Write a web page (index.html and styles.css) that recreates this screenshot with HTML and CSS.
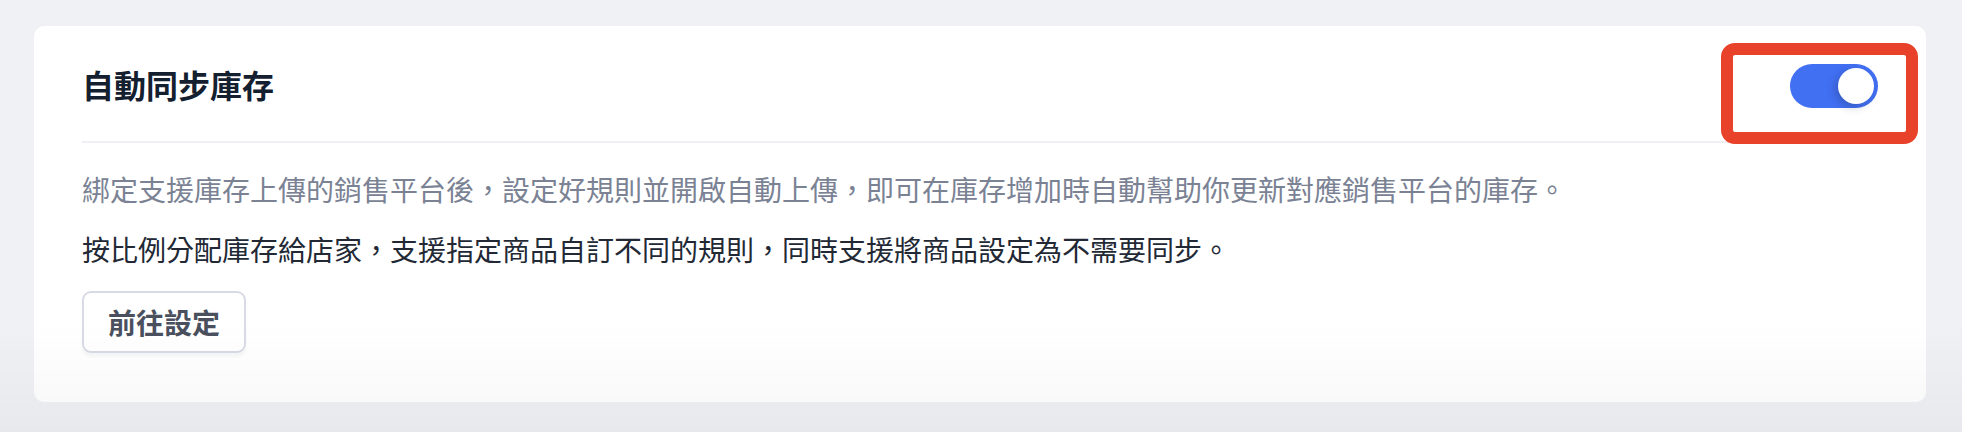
FILE: index.html
```html
<!DOCTYPE html>
<html>

<head>
  <meta charset="UTF-8">
  <link rel="stylesheet" href="styles.css">
  <title>自動同步庫存</title>
</head>

<body>
<div class="page">
  <div class="card">
    <div class="card-header">
      <h2 class="card-title">自動同步庫存</h2>
      <div class="switch switch-on">
        <span class="switch-knob"></span>
      </div>
    </div>
    <div class="card-body">
      <p class="desc-muted">綁定支援庫存上傳的銷售平台後，設定好規則並開啟自動上傳，即可在庫存增加時自動幫助你更新對應銷售平台的庫存。</p>
      <p class="desc">按比例分配庫存給店家，支援指定商品自訂不同的規則，同時支援將商品設定為不需要同步。</p>
      <button class="btn-setting">前往設定</button>
    </div>
    <div class="highlight-box"></div>
  </div>
</div>
<div class="bottom-fade"></div>
</body>
</html>
```

FILE: styles.css
```css
body {
    font-family: "Noto Sans CJK TC", "Noto Sans", sans-serif;
    background-color: #f0f1f5;
    margin: 0;
    padding: 0;
    height: 432px;
    overflow: hidden;
}

.page {
    padding: 26px 36px 0 34px;
}

.card {
    position: relative;
    background: #fff;
    border-radius: 10px;
    padding: 0 48px 49px 48px;
}

.card-header {
    display: flex;
    align-items: center;
    justify-content: space-between;
    height: 115px;
    border-bottom: 2px solid #eef0f4;
}

.card-title {
    margin: 0;
    font-size: 32px;
    font-weight: 600;
    line-height: 40px;
    color: #14202f;
}

.switch {
    width: 88px;
    height: 44px;
    border-radius: 22px;
    background: #d5d8e0;
    display: flex;
    align-items: center;
    padding: 0 4px;
    box-sizing: border-box;
    margin-top: 4px;
}

.switch-on {
    background: #4270f3;
    justify-content: flex-end;
}

.switch-knob {
    width: 36px;
    height: 36px;
    border-radius: 50%;
    background: #fff;
    box-shadow: -3px 3px 8px rgba(20, 30, 60, 0.25);
}

.card-body {
    padding-top: 26px;
}

.card-body p {
    margin: 0 0 20px 0;
    font-size: 28px;
    line-height: 40px;
}

.desc-muted {
    color: #7a8294;
}

.desc {
    color: #222935;
}

.btn-setting {
    margin-top: 2px;
    font-family: inherit;
    font-size: 28px;
    font-weight: 600;
    line-height: 32px;
    color: #4a505e;
    background: #fff;
    border: 2px solid #d8dbe5;
    border-radius: 9px;
    padding: 13px 24px;
    box-shadow: 0 4px 3px rgba(30, 40, 80, 0.04);
}

.highlight-box {
    position: absolute;
    left: 1687px;
    top: 17px;
    width: 197px;
    height: 101px;
    box-sizing: border-box;
    border: 12px solid #e8422a;
    border-radius: 14px;
}

.bottom-fade {
    position: fixed;
    left: 0;
    right: 0;
    bottom: 0;
    height: 110px;
    background: linear-gradient(to bottom, rgba(0, 0, 0, 0), rgba(40, 45, 60, 0.04));
    pointer-events: none;
}
```
